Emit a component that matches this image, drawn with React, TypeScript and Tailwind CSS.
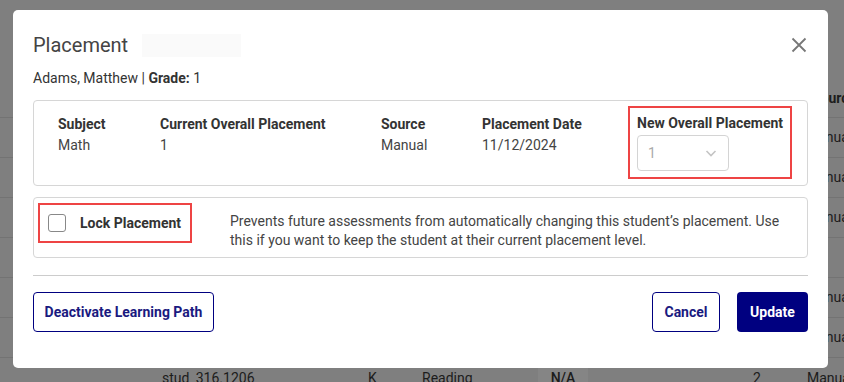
import React from 'react';

const font = { fontFamily: 'Roboto, "Liberation Sans", sans-serif' };

const bgRows = ['Manual', 'Manual', 'Manual', '', 'Manual', 'Manual'];

function BackgroundTable() {
  return (
    <div className="w-full text-[14px] text-[#1c1c1c]">
      <div className="h-[118px] flex items-end border-b border-[#737373]">
        <span className="ml-[812px] shrink-0 whitespace-nowrap font-bold leading-5 mb-[9px]">Source</span>
      </div>
      {bgRows.map((r, i) => (
        <div key={i} className="h-[40px] flex items-center border-b border-[#737373]">
          <span className="ml-[806px] shrink-0 whitespace-nowrap">{r}</span>
        </div>
      ))}
      <div className="h-[40px] flex items-center whitespace-nowrap">
        <span className="ml-[162px] w-[206px] shrink-0">stud_316.1206</span>
        <span className="w-[54px] shrink-0">K</span>
        <span className="w-[116px] shrink-0">Reading</span>
        <span className="w-[50px] h-full shrink-0 flex items-center justify-center bg-[#858585] font-medium">N/A</span>
        <span className="ml-[165px] w-[54px] shrink-0">2</span>
        <span className="shrink-0">Manual</span>
      </div>
    </div>
  );
}

function Field({ label, value, width }: { label: string; value: string; width: string }) {
  return (
    <div className={`${width} pt-[8px]`}>
      <div className="font-bold text-[#333] leading-5">{label}</div>
      <div className="mt-[1px] text-[#444] leading-5">{value}</div>
    </div>
  );
}

export default function App() {
  return (
    <div className="relative w-[844px] h-[382px] overflow-hidden bg-[#7f7f7f]" style={font}>
      <BackgroundTable />

      {/* modal */}
      <div className="absolute left-[13px] top-[10px] w-[815px] h-[358px] bg-white rounded-[5px] px-5 pt-[22px] text-[14px]">
        <div className="flex items-center justify-between h-[26px]">
          <div className="flex items-center">
            <h2 className="text-[20px] leading-[26px] text-[#444]">Placement</h2>
            <div className="ml-[14px] w-[99px] h-[23px] bg-[#fafafa]" />
          </div>
          <button className="mr-[1px] text-[#777]" aria-label="Close">
            <svg width="16" height="16" viewBox="0 0 16 16" fill="none" stroke="currentColor" strokeWidth="1.8">
              <path d="M1.5 1.5 L14.5 14.5 M14.5 1.5 L1.5 14.5" />
            </svg>
          </button>
        </div>

        <div className="mt-[10px] leading-5 text-[#333]">
          Adams, Matthew | <span className="font-bold">Grade:</span> 1
        </div>

        <div className="mt-[12px] h-[86px] border border-[#d6d6d6] rounded-[4px] flex items-start pl-[24px] pt-[5px]">
          <Field label="Subject" value="Math" width="w-[102px]" />
          <Field label="Current Overall Placement" value="1" width="w-[221px]" />
          <Field label="Source" value="Manual" width="w-[101px]" />
          <Field label="Placement Date" value="11/12/2024" width="w-[146px]" />
          <div className="border-2 border-[#ee4444] px-[7px] pt-[5px] w-[164px] h-[73px]">
            <div className="font-bold text-[#333] leading-5 whitespace-nowrap">New Overall Placement</div>
            <div className="mt-[2px] w-[92px] h-[36px] border border-[#d4d4d4] rounded-[4px] flex items-center justify-between pl-[10px] pr-[10px] text-[#aaa]">
              <span>1</span>
              <svg width="14" height="14" viewBox="0 0 14 14" fill="none" stroke="#c4c4c4" strokeWidth="1.6">
                <path d="M2.5 5 L7 9.5 L11.5 5" />
              </svg>
            </div>
          </div>
        </div>

        <div className="mt-[11px] h-[61px] border border-[#d6d6d6] rounded-[4px] flex items-start pl-[4px] pr-[18px] pt-[5px]">
          <div className="h-[40px] w-[154px] shrink-0 border-2 border-[#ee4444] flex items-center pl-[8px]">
            <span className="w-[18px] h-[18px] rounded-[3px] border border-[#888] bg-white" />
            <span className="ml-[14px] font-bold text-[#333]">Lock Placement</span>
          </div>
          <p className="ml-[38px] flex-1 text-[#444] leading-[19px] mt-[9px]">
            Prevents future assessments from automatically changing this student’s placement. Use this if you want to keep the student at their current placement level.
          </p>
        </div>

        <div className="mt-[17px] border-t border-[#cccccc]" />

        <div className="mt-[16px] flex items-center justify-between">
          <button className="h-[40px] w-[181px] border border-[#000080] rounded-[4px] text-[#1a1a80] font-bold">
            Deactivate Learning Path
          </button>
          <div className="flex gap-[17px]">
            <button className="h-[40px] w-[68px] border border-[#000080] rounded-[4px] text-[#1a1a80] font-bold">Cancel</button>
            <button className="h-[40px] w-[71px] bg-[#000080] rounded-[4px] text-white font-bold">Update</button>
          </div>
        </div>
      </div>
    </div>
  );
}
